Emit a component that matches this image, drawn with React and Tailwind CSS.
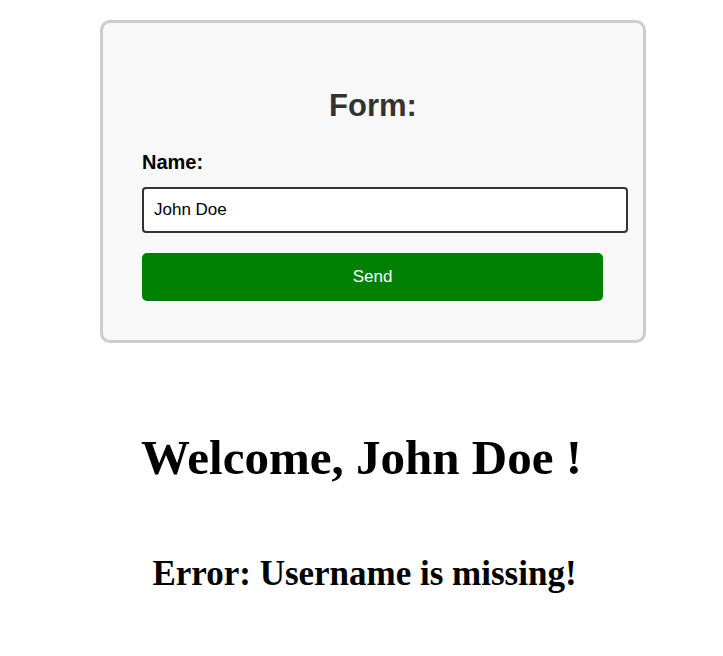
export default function App() {
  return (
    <div className="w-[723px] min-h-[656px] bg-white pt-[20px]">
      <div className="ml-[100px] w-[546px] h-[323px] border-[3px] border-[#ccc] rounded-[10px] bg-[#f8f8f8] pl-[39px] pt-[65px]" style={{ fontFamily: '"Liberation Sans", Arial, sans-serif' }}>
        <h2 className="text-[31px] leading-[35px] font-bold text-[#333] text-center pr-[39px]">Form:</h2>
        <label className="block mt-[28px] text-[20px] leading-[23px] font-bold text-black">Name:</label>
        <div className="mt-[13px] w-[486px] h-[46px] border-2 border-[#333] rounded-[4px] bg-white px-[10px] flex items-center text-[17px] text-black">
          John Doe
        </div>
        <button className="mt-[20px] w-[461px] h-[48px] bg-[#008000] rounded-[5px] text-white text-[17px] flex items-center justify-center">
          Send
        </button>
      </div>
      <h1 className="mt-[87px] text-center text-[49px] leading-[56px] font-bold text-black" style={{ fontFamily: '"Liberation Serif", "Times New Roman", serif' }}>
        Welcome, John Doe !
      </h1>
      <h2 className="mt-[68px] text-center text-[35px] leading-[40px] font-bold text-black pl-[6px]" style={{ fontFamily: '"Liberation Serif", "Times New Roman", serif' }}>
        Error: Username is missing!
      </h2>
    </div>
  );
}
